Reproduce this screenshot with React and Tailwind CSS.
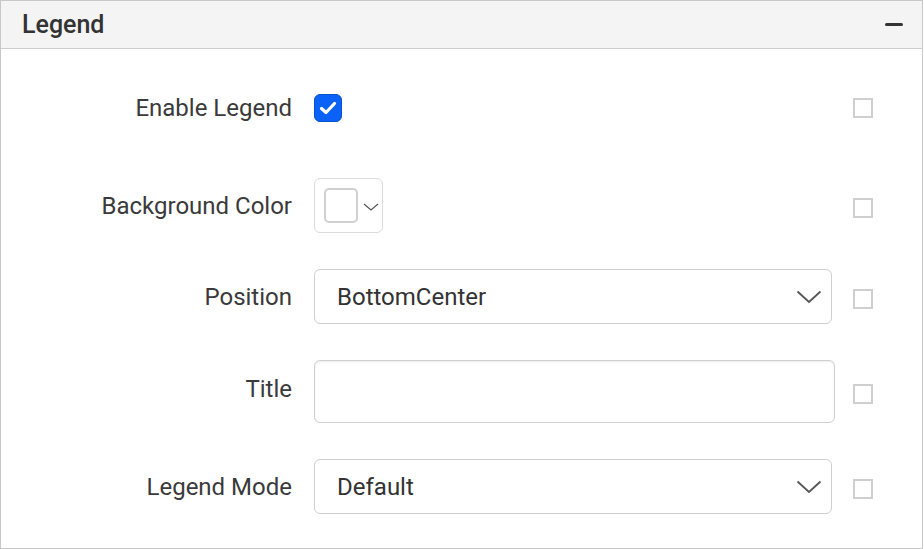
import React from "react";

const font = { fontFamily: "Roboto, 'Noto Sans', Arial, sans-serif" };

function SideBox({ shift }) {
  return <div className={"w-5 h-5 border-2 border-[#cfcfcf] bg-white shrink-0 " + (shift ? "mt-[4px]" : "")} />;
}

function Chevron() {
  return (
    <svg width="26" height="14" viewBox="0 0 26 14" className="shrink-0">
      <path d="M1.5 1.5 L13 12 L24.5 1.5" fill="none" stroke="#555" strokeWidth="1.8" strokeLinejoin="miter" />
    </svg>
  );
}

function Row({ label, children, labelClass = "", shift = true }) {
  return (
    <div className="flex items-center">
      <div className={"w-[291px] shrink-0 text-right text-[24px] text-[#3a3a3a] leading-none " + labelClass}>{label}</div>
      <div className="ml-[22px] w-[521px] shrink-0 flex items-center">{children}</div>
      <div className="ml-[18px] flex items-center">
        <SideBox shift={shift} />
      </div>
    </div>
  );
}

function Select({ value }) {
  return (
    <div className="w-[518px] h-[55px] border border-[#cfcfcf] rounded-[6px] bg-white flex items-center justify-between pl-[22px] pr-[9px]">
      <span className="text-[24px] text-[#333] leading-none">{value}</span>
      <Chevron />
    </div>
  );
}

export default function App() {
  return (
    <div style={font} className="w-[924px] h-[549px] bg-white">
      <div className="w-[923px] h-[549px] border border-[#c8c8c8] flex flex-col">
        <div className="h-[48px] bg-[#f4f4f4] border-b border-[#cfcfcf] flex items-center justify-between pl-[21px] pr-[19px] shrink-0">
          <span className="text-[25px] text-[#333] font-medium leading-none">Legend</span>
          <div className="w-[18px] h-[3px] bg-[#333] rounded-sm" />
        </div>
        <div className="flex flex-col gap-9 pt-[31px]">
          <div className="h-[55px] mb-[7px] flex items-center">
            <Row label="Enable Legend" shift={false}>
              <div className="w-[28px] h-[28px] rounded-[6px] bg-[#0b62f8] border border-[#0a50c8] flex items-center justify-center">
                <svg width="18" height="14" viewBox="0 0 18 14">
                  <path d="M2.5 7.5 L7 11.5 L15.5 2.5" fill="none" stroke="#fff" strokeWidth="3.2" strokeLinecap="round" strokeLinejoin="round" />
                </svg>
              </div>
            </Row>
          </div>
          <Row label="Background Color">
            <div className="w-[69px] h-[55px] border border-[#dcdcdc] rounded-[6px] bg-white flex items-center pl-[9px]">
              <div className="w-[34px] h-[35px] border-2 border-[#d0d0d0] rounded-[5px] bg-white" />
              <svg width="16" height="8" viewBox="0 0 16 8" className="ml-[5px] mt-[2px]">
                <path d="M1 1 L8 7 L15 1" fill="none" stroke="#555" strokeWidth="1.2" />
              </svg>
            </div>
          </Row>
          <Row label="Position">
            <Select value="BottomCenter" />
          </Row>
          <Row label="Title" labelClass="-mt-[6px]">
            <div className="w-[521px] h-[63px] border border-[#cfcfcf] rounded-[6px] bg-white shadow-[inset_0_1px_2px_rgba(0,0,0,0.08)]" />
          </Row>
          <Row label="Legend Mode">
            <Select value="Default" />
          </Row>
        </div>
      </div>
    </div>
  );
}
